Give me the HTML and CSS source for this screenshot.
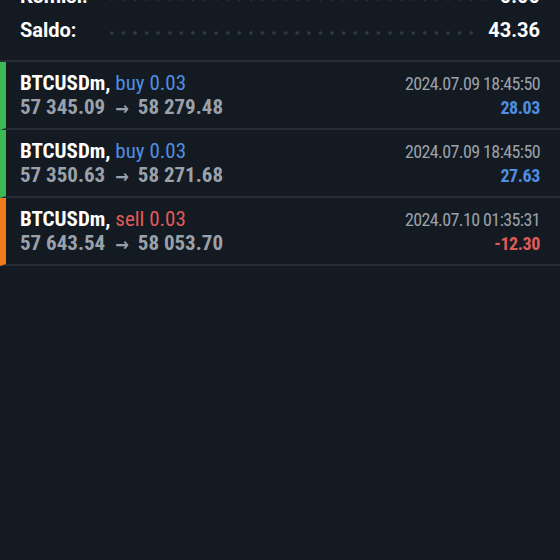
FILE: index.html
```html
<!DOCTYPE html>
<html lang="id">
<head>
    <meta charset="UTF-8">
    <meta name="viewport" content="width=device-width, initial-scale=1.0">
    <title>Riwayat</title>
    <link rel="stylesheet" href="styles.css">
</head>
<body>
    <div class="summary">
        <div class="summary-row">
            <span class="label">Komisi:</span>
            <span class="leader"></span>
            <span class="value">0.00</span>
        </div>
        <div class="summary-row">
            <span class="label">Saldo:</span>
            <span class="leader"></span>
            <span class="value">43.36</span>
        </div>
    </div>

    <div class="trades">
        <div class="trade buy">
            <div class="trade-main">
                <div class="title">BTCUSDm, <span class="side">buy 0.03</span></div>
                <div class="prices">57 345.09<span class="arrow">&rarr;</span>58 279.48</div>
            </div>
            <div class="trade-side">
                <div class="time">2024.07.09 18:45:50</div>
                <div class="profit">28.03</div>
            </div>
        </div>
        <div class="trade buy">
            <div class="trade-main">
                <div class="title">BTCUSDm, <span class="side">buy 0.03</span></div>
                <div class="prices">57 350.63<span class="arrow">&rarr;</span>58 271.68</div>
            </div>
            <div class="trade-side">
                <div class="time">2024.07.09 18:45:50</div>
                <div class="profit">27.63</div>
            </div>
        </div>
        <div class="trade sell">
            <div class="trade-main">
                <div class="title">BTCUSDm, <span class="side">sell 0.03</span></div>
                <div class="prices">57 643.54<span class="arrow">&rarr;</span>58 053.70</div>
            </div>
            <div class="trade-side">
                <div class="time">2024.07.10 01:35:31</div>
                <div class="profit">-12.30</div>
            </div>
        </div>
    </div>
</body>
</html>
```

FILE: styles.css
```css
body {
    margin: 0;
    background-color: #141a21;
    color: #fff;
    font-family: "Roboto Condensed", Roboto, "Liberation Sans", sans-serif;
    font-stretch: condensed;
    height: 560px;
    overflow: hidden;
}
.summary {
    margin-top: -21px;
    padding-bottom: 13px;
    border-bottom: 2px solid #262d35;
    font-family: Roboto, "Liberation Sans", sans-serif;
    font-stretch: normal;
}
.summary-row {
    display: flex;
    align-items: center;
    height: 34px;
    padding: 0 20px 0 20px;
}
.summary-row .label {
    width: 86px;
    font-size: 20px;
    font-weight: bold;
}
.leader {
    flex: 1;
    height: 4px;
    margin: 6px 14px 0 0;
    background-image: radial-gradient(circle, #323a44 1.4px, transparent 1.9px);
    background-size: 11.6px 4px;
    background-repeat: repeat-x;
}
.summary-row .value {
    font-size: 20px;
    font-weight: bold;
}
.trade {
    display: flex;
    justify-content: space-between;
    padding: 9px 20px 9px 14px;
    border-left: 6px solid #3cba54;
    border-bottom: 2px solid #262d35;
}
.trade.sell {
    border-left-color: #f07a1c;
}
.title {
    font-size: 21px;
    font-weight: bold;
    line-height: 24px;
}
.side {
    font-weight: normal;
    color: #4f8ee0;
}
.sell .side {
    color: #e05a5a;
}
.prices {
    height: 24px;
    font-size: 21px;
    font-weight: bold;
    line-height: 24px;
    color: #9aa1ab;
}
.arrow {
    display: inline-block;
    margin: 0 9px 0 10px;
    font-family: "DejaVu Sans", sans-serif;
    font-size: 18px;
    font-weight: bold;
    line-height: 16px;
    transform: translateY(1px);
}
.trade-side {
    text-align: right;
    padding-top: 1px;
}
.time {
    font-size: 18px;
    line-height: 24px;
    letter-spacing: -0.6px;
    color: #9aa1ab;
}
.profit {
    font-size: 18px;
    font-weight: bold;
    line-height: 23px;
    letter-spacing: -0.4px;
    color: #4f8ee0;
}
.sell .profit {
    color: #e05a5a;
}
```
